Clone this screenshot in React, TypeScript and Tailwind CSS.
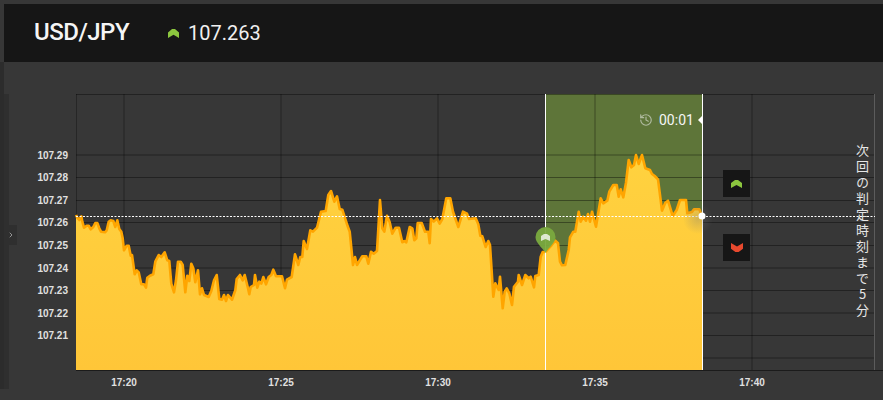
import { ChevronRight, History } from "lucide-react";

// Traced points, given in the coordinates of a 3x crop: [x0, y0] is the crop's corner
function trace(x0: number, y0: number, pts: number[]): [number, number][] {
  const out: [number, number][] = [];
  for (let i = 0; i < pts.length; i += 2) {
    out.push([x0 + pts[i] / 3, y0 + pts[i + 1] / 3]);
  }
  return out;
}

const SERIES: [number, number][] = [
  ...trace(70, 205, [
    18, 30, 22, 38, 28, 45, 34, 34, 37, 50, 42, 68, 50, 62, 56, 62, 62, 73, 70, 66, 76, 54, 82, 54, 88, 70, 93, 80,
    105, 82, 110, 76, 116, 50, 122, 46, 130, 48, 136, 66, 142, 46, 148, 72, 154, 80, 158, 100, 162, 136, 170, 122,
    176, 122, 182, 152, 186, 150, 194, 208, 200, 196, 206, 202, 214, 238, 222, 238, 228, 248, 232, 218, 240, 212,
    250, 208, 256, 170, 266, 150, 274, 156, 284, 142, 292, 166, 298, 168, 304, 236, 312, 262, 318, 226, 324, 170,
    332, 170, 338, 180, 346, 262, 352, 212, 358, 228, 364, 176, 370, 190, 376, 232, 384, 196, 390, 268, 396, 250,
    402, 270, 416, 276, 424, 258, 432, 226, 440, 210, 448, 282, 456, 284, 462, 270, 468, 288, 474, 270, 486, 284,
    496, 256, 500, 222, 510, 210, 518, 226, 524, 210, 534, 250, 538, 268, 542, 246, 552, 240, 555, 210, 562, 248,
    568, 230, 574, 236, 580, 216, 588, 238, 596, 216, 604, 210, 610, 194, 618, 214, 636, 214,
  ]),
  ...trace(285, 185, [
    0, 310, 6, 284, 20, 276, 30, 208, 40, 240, 46, 216, 52, 216, 56, 168, 66, 192, 76, 136, 84, 140, 96, 128, 108, 80,
    122, 78, 130, 30, 138, 18, 148, 50, 156, 34, 164, 72, 172, 74, 188, 124, 194, 140, 204, 240, 210, 216, 216, 240,
    232, 214, 244, 214, 250, 236, 258, 200, 266, 206, 276, 198, 285, 45, 292, 130, 298, 140, 306, 92, 314, 112,
    322, 146, 332, 128, 342, 128, 352, 172, 358, 168, 364, 172, 374, 126, 382, 130, 388, 166, 394, 160, 398, 114,
    410, 114, 420, 140, 430, 140, 434, 175, 438, 102, 446, 110, 456, 100, 464, 116, 472, 102, 484, 40, 496, 40,
    504, 80, 520, 126, 534, 80, 546, 86, 552, 102, 572, 100, 580, 118, 586, 152, 592, 154, 602, 186, 610, 168,
  ]),
  ...trace(490, 150, [
    0, 285, 10, 440, 16, 400, 26, 420, 30, 380, 38, 475, 44, 425, 50, 415, 58, 430, 66, 465, 72, 410, 84, 395, 86, 375,
    96, 405, 106, 375, 116, 385, 122, 380, 132, 412, 136, 378, 146, 375, 152, 320, 158, 306, 166, 306, 185, 285,
    196, 272, 204, 280, 210, 335, 216, 346, 226, 345, 236, 300, 240, 262, 250, 245, 256, 245, 266, 185, 272, 215,
    280, 200, 288, 212, 294, 192, 300, 215, 306, 185, 318, 230, 332, 145, 340, 160, 352, 152, 358, 125, 370, 105,
    380, 105, 386, 140, 392, 118, 400, 142, 408, 98, 416, 30, 424, 52, 432, 45, 438, 15, 446, 42, 456, 15, 466, 55,
    480, 60, 486, 72, 494, 78, 504, 88, 516, 182, 526, 158, 534, 152, 548, 198, 560, 180, 570, 150, 588, 150,
    592, 190, 606, 186, 612, 178, 628, 178, 636, 198,
  ]),
];

const LINE = SERIES.map(([x, y]) => `${x.toFixed(1)},${y.toFixed(1)}`).join(" ");
const AREA = `76,370 ${LINE} 702,370`;

const PRICE_TICKS = [
  { y: 155, label: "107.29" },
  { y: 177.5, label: "107.28" },
  { y: 200.5, label: "107.27" },
  { y: 222.5, label: "107.26" },
  { y: 245.5, label: "107.25" },
  { y: 268, label: "107.24" },
  { y: 290.5, label: "107.23" },
  { y: 313, label: "107.22" },
  { y: 335.5, label: "107.21" },
];
const TIME_TICKS = [
  { x: 124, label: "17:20" },
  { x: 281, label: "17:25" },
  { x: 438, label: "17:30" },
  { x: 595, label: "17:35" },
  { x: 752, label: "17:40" },
];

function Chevron({ down, className }: { down?: boolean; className: string }) {
  return (
    <svg viewBox="0 0 11 8" className={className} fill="currentColor" preserveAspectRatio="none">
      <polygon points={down ? "0,0 5.5,3 11,0 11,5 7,8 4,8 0,5" : "0,3 4,0 7,0 11,3 11,8 5.5,5 0,8"} />
    </svg>
  );
}

function PriceChart() {
  return (
    <svg viewBox="9 62 874 338" className="block h-[338px] w-[874px]">
      <defs>
        <linearGradient id="area" x1="0" y1="0" x2="0" y2="1">
          <stop offset="0" stopColor="#ffd23f" />
          <stop offset="1" stopColor="#ffc638" />
        </linearGradient>
        <radialGradient id="glow">
          <stop offset="0" stopColor="#777777" stopOpacity="0.32" />
          <stop offset="1" stopColor="#777777" stopOpacity="0" />
        </radialGradient>
      </defs>

      <rect x="546" y="94" width="156" height="276" fill="#5e7539" />

      {PRICE_TICKS.map((t) => (
        <line key={t.y} x1="76" x2="874" y1={t.y} y2={t.y} stroke="#000" strokeOpacity="0.38" />
      ))}
      <line x1="76" x2="874" y1="358" y2="358" stroke="#000" strokeOpacity="0.38" />
      <line x1="76" x2="874" y1="94.5" y2="94.5" stroke="#000" strokeOpacity="0.38" />
      <line x1="76.5" x2="76.5" y1="94" y2="370" stroke="#000" strokeOpacity="0.3" />
      {TIME_TICKS.map((t) => (
        <line key={t.x} x1={t.x} x2={t.x} y1="94" y2="370" stroke="#000" strokeOpacity="0.18" strokeWidth="2" />
      ))}
      <line x1="874.5" x2="874.5" y1="94" y2="370" stroke="#5c5c5c" />

      <polygon points={AREA} fill="url(#area)" />
      <polyline points={LINE} fill="none" stroke="#ffa500" strokeWidth="2.6" strokeLinejoin="round" />

      <line x1="76" x2="883" y1="370.5" y2="370.5" stroke="#1b1b1b" />
      <line x1="545.5" x2="545.5" y1="94" y2="370" stroke="#fff" />
      <line x1="702.5" x2="702.5" y1="94" y2="370" stroke="#fff" />
      <line x1="76" x2="875" y1="216.5" y2="216.5" stroke="#fff" strokeDasharray="2 1.5" />

      <circle cx="698" cy="219" r="15" fill="url(#glow)" />
      <circle cx="702" cy="216" r="3.5" fill="#fff" />

      <path d="M545.5 253 C542 247 535.5 243 535.5 237 A10 10 0 0 1 555.5 237 C555.5 243 549 247 545.5 253 Z" fill="#7aaa3e" fillOpacity="0.95" />
      <polygon points="541,236 544,234 547,234 550,236 550,241 545.5,239 541,241" fill="#fff" fillOpacity="0.75" />

      <g className="font-['Liberation_Sans',Arial,sans-serif] text-[10px] font-bold" fill="#e0e0e0">
        {PRICE_TICKS.map((t) => (
          <text key={t.label} x="68" y={t.y + 3.5} textAnchor="end">
            {t.label}
          </text>
        ))}
        {TIME_TICKS.map((t) => (
          <text key={t.label} x={t.x} y="386" textAnchor="middle">
            {t.label}
          </text>
        ))}
      </g>
    </svg>
  );
}

export default function App() {
  return (
    <div className="flex h-[400px] w-[883px] overflow-hidden bg-[#373737] font-['Roboto',sans-serif] text-white">
      <div className="mt-[62px] mb-[11px] w-1 shrink-0 bg-[#2c2c2c]" />
      <div className="flex min-w-0 flex-1 flex-col pt-1">
        <header className="flex h-[58px] items-center bg-[#161616] pl-[30px]">
          <h1 className="w-[134px] pb-[2px] text-[24px] font-medium tracking-[-0.5px] text-[#f5f5f5]">USD/JPY</h1>
          <Chevron className="mr-[9px] h-[9px] w-[11px] text-[#8cc63f]" />
          <span className="text-[20px] text-[#f0f0f0]">107.263</span>
        </header>

        <div className="flex flex-1">
          <div className="relative mt-8 mb-[11px] w-[5px] shrink-0 bg-[#2f2f2f]">
            <div className="absolute top-[131px] left-0 flex h-5 w-[13px] items-center justify-center bg-[#2f2f2f] text-[#a8a8a8]">
              <ChevronRight className="h-2 w-2" strokeWidth={2.5} />
            </div>
          </div>

          <div className="relative">
            <PriceChart />

            <div className="absolute top-[50px] left-[630px] flex items-center">
              <History className="mr-[6px] h-[14px] w-[14px] text-[#b0bba0]" strokeWidth={2} />
              <span className="text-[14px] leading-4 text-[#f5f5f5]">00:01</span>
              <div className="ml-1 h-0 w-0 border-y-[4px] border-r-[4px] border-y-transparent border-r-white" />
            </div>

            <button className="absolute top-[108px] left-[714px] flex h-[27px] w-[27px] items-center justify-center bg-[#161616]">
              <Chevron className="h-2 w-[11px] text-[#8cc63f]" />
            </button>
            <button className="absolute top-[172px] left-[714px] flex h-[27px] w-[27px] items-center justify-center bg-[#161616]">
              <Chevron down className="h-[9px] w-3 text-[#e8492e]" />
            </button>

            <div className="absolute top-[82px] left-[845px] font-['Noto_Sans_CJK_JP',sans-serif] text-[13px] leading-4 tracking-[3px] text-[#e6e6e6] [text-orientation:upright] [writing-mode:vertical-rl]">
              次回の判定時刻まで5分
            </div>
          </div>
        </div>
      </div>
    </div>
  );
}
